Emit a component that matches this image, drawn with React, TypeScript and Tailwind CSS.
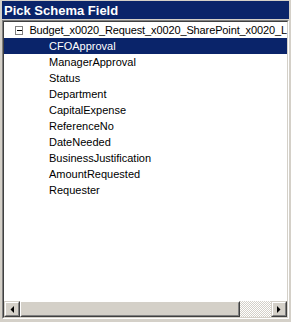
const fields = [
  "CFOApproval",
  "ManagerApproval",
  "Status",
  "Department",
  "CapitalExpense",
  "ReferenceNo",
  "DateNeeded",
  "BusinessJustification",
  "AmountRequested",
  "Requester",
];

export default function App() {
  return (
    <div
      className="w-[291px] h-[322px] bg-[#d4d0c8] flex flex-col px-[2px] pt-[1px] pb-[3px] text-[11px] leading-none text-black select-none"
      style={{ fontFamily: '"Liberation Sans", Arial, sans-serif' }}
    >
      {/* title */}
      <div className="h-[18px] bg-[#0a246a] text-white font-bold text-[13px] flex items-center pl-[2px]">
        Pick Schema Field
      </div>

      {/* tree panel */}
      <div className="mt-[1px] flex-1 min-h-0 border border-t-[#808080] border-l-[#808080] border-r-white border-b-white">
        <div className="h-full flex flex-col border border-t-[#404040] border-l-[#404040] border-r-[#d4d0c8] border-b-[#d4d0c8] bg-white">
          <div className="flex-1 min-h-0 overflow-hidden">
            <div className="h-[16px] flex items-center whitespace-nowrap">
              <div className="ml-[11px] w-[9px] h-[9px] border border-[#808080] bg-white flex items-center justify-center">
                <div className="w-[5px] h-px bg-black" />
              </div>
              <span className="ml-[6px] tracking-[-0.12px]">Budget_x0020_Request_x0020_SharePoint_x0020_L</span>
            </div>
            {fields.map((f, i) => (
              <div
                key={f}
                className={
                  i === 0
                    ? "h-[16px] flex items-center pl-[45px] bg-[#0a246a] text-white"
                    : "h-[16px] flex items-center pl-[45px]"
                }
              >
                {f}
              </div>
            ))}
          </div>

          {/* horizontal scrollbar */}
          <div className="h-[16px] flex bg-[#d4d0c8]">
            <ScrollButton dir="left" />
            <div className="w-[220px] border border-t-white border-l-white border-r-[#404040] border-b-[#404040]">
              <div className="h-full border border-t-[#d4d0c8] border-l-[#d4d0c8] border-r-[#808080] border-b-[#808080]" />
            </div>
            <div className="flex-1 bg-[repeating-conic-gradient(#ffffff_0_25%,#d4d0c8_0_50%)] bg-[length:2px_2px]" />
            <ScrollButton dir="right" />
          </div>
        </div>
      </div>
    </div>
  );
}

function ScrollButton({ dir }: { dir: "left" | "right" }) {
  return (
    <div className="w-[16px] h-[16px] border border-t-[#d4d0c8] border-l-[#d4d0c8] border-r-[#404040] border-b-[#404040]">
      <div className="h-full border border-t-white border-l-white border-r-[#808080] border-b-[#808080] flex items-center justify-center">
        <svg width="4" height="7" viewBox="0 0 4 7">
          {dir === "left" ? (
            <path d="M4 0V7L0.5 3.5Z" fill="#000" />
          ) : (
            <path d="M0 0V7L3.5 3.5Z" fill="#000" />
          )}
        </svg>
      </div>
    </div>
  );
}
